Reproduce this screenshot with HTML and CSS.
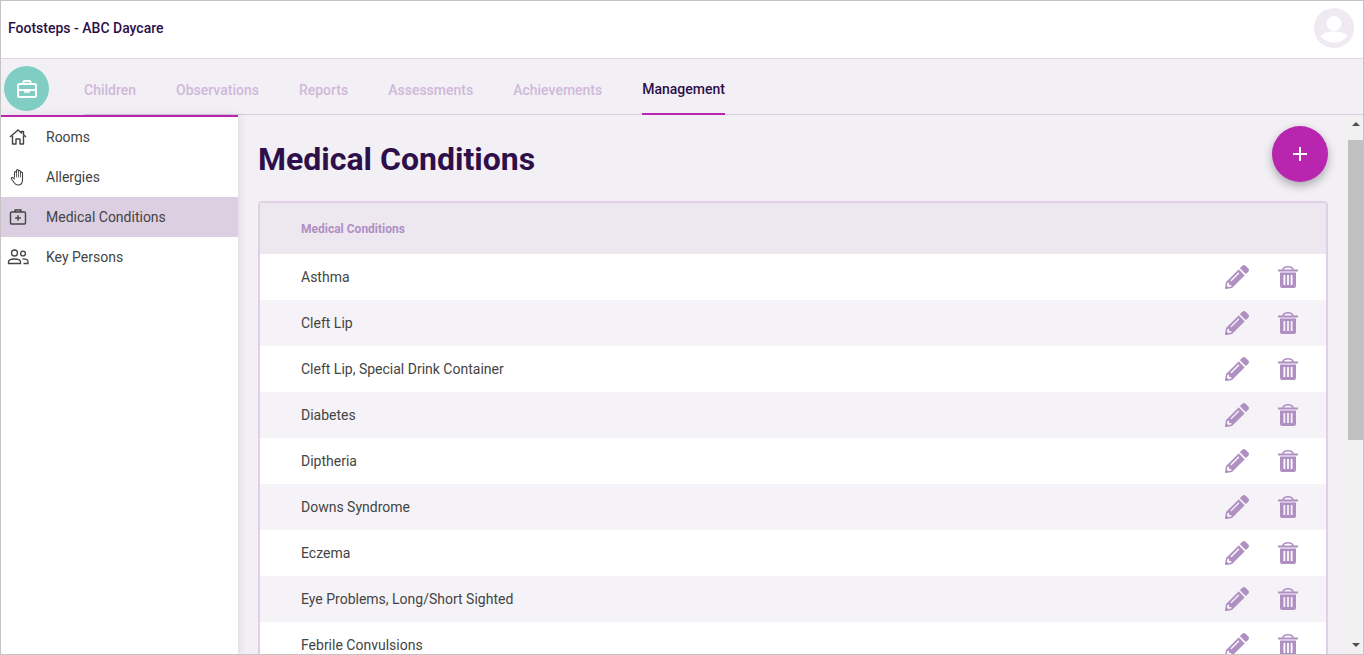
FILE: index.html
```html
<!DOCTYPE html>
<html lang="en">
<head>
    <meta charset="utf-8" />
    <title>Medical Conditions</title>
    <link rel="stylesheet" href="styles.css">
</head>
<body>
<div class="frame">
    <header class="top">
        <div class="brand">Footsteps - ABC Daycare</div>
        <svg class="avatar" viewBox="0 0 40 40">
            <circle cx="20" cy="20" r="20" fill="#efeaf1"/>
            <circle cx="20" cy="15.5" r="7.5" fill="#fff"/>
            <path d="M6.5 28c3-3.4 8-4.6 13.500-4.600s10.500 1.200 13.500 4.600c-3.200 4-8 6.500-13.500 6.500S9.700 32 6.500 28z" fill="#fff"/>
        </svg>
    </header>
    <nav class="nav">
        <div class="logo">
            <svg width="20" height="18" viewBox="0 0 20 18" fill="none" stroke="#fff" stroke-width="2">
                <path d="M6.500 4V2a1 1 0 0 1 1-1h5a1 1 0 0 1 1 1v2"/>
                <rect x="1" y="4" width="18" height="13" rx="1.500"/>
                <path d="M1 10h18"/>
                <path d="M8 10v2h4v-2" stroke-width="1.500"/>
            </svg>
        </div>
        <div class="tabs">
            <a class="tab">Children</a>
            <a class="tab">Observations</a>
            <a class="tab">Reports</a>
            <a class="tab">Assessments</a>
            <a class="tab">Achievements</a>
            <a class="tab tab-active">Management</a>
        </div>
    </nav>
    <div class="body">
        <aside class="side">
            <a class="side-item">
                <svg class="side-icon" viewBox="0 0 20 20" fill="none" stroke="#444" stroke-width="1.400" stroke-linejoin="round">
                    <path d="M2 10l8-7 3.500 3V4.500h2v3.200L18 10"/>
                    <path d="M4.500 8.500V17H8v-5h4v5h3.500V8.500"/>
                </svg>
                Rooms
            </a>
            <a class="side-item">
                <svg class="side-icon" viewBox="0 0 20 20" fill="none" stroke="#444" stroke-width="1.100" stroke-linecap="round" stroke-linejoin="round">
                    <path d="M6.500 10V5.500a1 1 0 0 1 2 0V3.500a1 1 0 0 1 2 0v1a1 1 0 0 1 2 0v1.500a1 1 0 0 1 2 0V13c0 3-1.800 5-4.500 5H10c-2 0-3-1-4-2.500L3.500 12c-.7-1 .6-2.200 1.600-1.300L6.500 12"/>
                    <path d="M8.500 5.500V10M10.500 4.500V10M12.500 6V10" stroke-width=".8"/>
                </svg>
                Allergies
            </a>
            <a class="side-item side-item-on">
                <svg class="side-icon" viewBox="0 0 20 20" fill="none" stroke="#444" stroke-width="1.400" stroke-linejoin="round">
                    <rect x="2.500" y="5" width="15" height="12" rx="1"/>
                    <path d="M7 5V3h6v2"/>
                    <path d="M10 8.200v5.600M7.200 11h5.600"/>
                </svg>
                Medical Conditions
            </a>
            <a class="side-item">
                <svg class="side-icon side-icon-wide" viewBox="0 0 22 20" fill="none" stroke="#444" stroke-width="1.300">
                    <circle cx="7.500" cy="6" r="3"/>
                    <path d="M1.500 16.500v-1.500c0-2 2.500-3 6-3s6 1 6 3v1.500z"/>
                    <circle cx="16" cy="6.500" r="2.400"/>
                    <path d="M15.500 11.800c3 0 5.500.8 5.500 2.700v2h-4.500"/>
                </svg>
                Key Persons
            </a>
        </aside>
        <main class="main">
            <div class="page-head">
                <h1 class="title">Medical Conditions</h1>
                <button class="fab">
                    <svg width="16" height="16" viewBox="0 0 16 16"><path d="M7 1h2v6h6v2H9v6H7V9H1V7h6z" fill="#fff"/></svg>
                </button>
            </div>
            <div class="card">
                <div class="card-head">Medical Conditions</div>
                <div class="row"><span>Asthma</span><div class="acts"><svg class="pen" viewBox="0 0 512 512"><use href="#pen"/></svg><svg class="bin" viewBox="0 0 20 22"><use href="#bin"/></svg></div></div>
                <div class="row"><span>Cleft Lip</span><div class="acts"><svg class="pen" viewBox="0 0 512 512"><use href="#pen"/></svg><svg class="bin" viewBox="0 0 20 22"><use href="#bin"/></svg></div></div>
                <div class="row"><span>Cleft Lip, Special Drink Container</span><div class="acts"><svg class="pen" viewBox="0 0 512 512"><use href="#pen"/></svg><svg class="bin" viewBox="0 0 20 22"><use href="#bin"/></svg></div></div>
                <div class="row"><span>Diabetes</span><div class="acts"><svg class="pen" viewBox="0 0 512 512"><use href="#pen"/></svg><svg class="bin" viewBox="0 0 20 22"><use href="#bin"/></svg></div></div>
                <div class="row"><span>Diptheria</span><div class="acts"><svg class="pen" viewBox="0 0 512 512"><use href="#pen"/></svg><svg class="bin" viewBox="0 0 20 22"><use href="#bin"/></svg></div></div>
                <div class="row"><span>Downs Syndrome</span><div class="acts"><svg class="pen" viewBox="0 0 512 512"><use href="#pen"/></svg><svg class="bin" viewBox="0 0 20 22"><use href="#bin"/></svg></div></div>
                <div class="row"><span>Eczema</span><div class="acts"><svg class="pen" viewBox="0 0 512 512"><use href="#pen"/></svg><svg class="bin" viewBox="0 0 20 22"><use href="#bin"/></svg></div></div>
                <div class="row"><span>Eye Problems, Long/Short Sighted</span><div class="acts"><svg class="pen" viewBox="0 0 512 512"><use href="#pen"/></svg><svg class="bin" viewBox="0 0 20 22"><use href="#bin"/></svg></div></div>
                <div class="row"><span>Febrile Convulsions</span><div class="acts"><svg class="pen" viewBox="0 0 512 512"><use href="#pen"/></svg><svg class="bin" viewBox="0 0 20 22"><use href="#bin"/></svg></div></div>
            </div>
        </main>
        <div class="scroll">
            <div class="scroll-up"></div>
            <div class="scroll-thumb"></div>
            <div class="scroll-down"></div>
        </div>
    </div>
</div>
<svg class="defs" width="0" height="0">
    <defs>
        <g id="pen"><path d="M497.900 142.100l-46.100 46.100c-4.700 4.700-12.300 4.700-17 0l-111-111c-4.700-4.700-4.700-12.300 0-17l46.100-46.100c18.700-18.700 49.100-18.700 67.900 0l60.100 60.100c18.800 18.700 18.800 49.100 0 67.900zM284.200 99.800L21.600 362.400.4 483.900c-2.900 16.400 11.400 30.600 27.800 27.800l121.500-21.300 262.600-262.600c4.700-4.700 4.700-12.300 0-17l-111-111c-4.800-4.700-12.400-4.700-17.100 0zM124.100 339.900c-5.500-5.500-5.500-14.300 0-19.800l154-154c5.500-5.500 14.300-5.500 19.800 0s5.500 14.300 0 19.800l-154 154c-5.500 5.500-14.300 5.500-19.800 0zM88 424h48v36.300l-64.500 11.300-31.100-31.100L51.700 376H88v48z"/></g>
        <g id="bin"><path fill-rule="evenodd" d="M0 3.500h4.200C4.600 1.400 6.500 0 10 0s5.400 1.400 5.800 3.500H20v2H0zM5.800 3.500h8.400C13.800 2.300 12.400 1.500 10 1.500S6.200 2.300 5.800 3.500zM2 6.500h16V20a2 2 0 0 1-2 2H4a2 2 0 0 1-2-2zM5.500 9v10h1.800V9zM9.100 9v10h1.800V9zM12.700 9v10h1.800V9z"/></g>
    </defs>
</svg>
</body>
</html>
```
FILE: styles.css
```css
* {
    box-sizing: border-box;
    padding: 0;
    margin: 0;
    font-family: Roboto, "Liberation Sans", sans-serif;
}
body {
    background-color: #fff;
}
.frame {
    display: flex;
    flex-direction: column;
    height: 655px;
    border: 1px solid #c4c4c4;
    overflow: hidden;
}
.defs {
    position: absolute;
}

/* top bar */
.top {
    display: flex;
    justify-content: space-between;
    align-items: center;
    flex: none;
    height: 58px;
    padding: 0 9px 3px 7px;
    border-bottom: 1px solid #e3d2ea;
    background-color: #fff;
}
.brand {
    font-size: 14px;
    font-weight: 500;
    color: #2e0f4a;
}
.avatar {
    width: 40px;
    height: 40px;
}

/* tabs */
.nav {
    display: flex;
    flex: none;
    height: 56px;
    background-color: #f2f0f5;
}
.logo {
    display: flex;
    justify-content: center;
    align-items: center;
    flex: none;
    width: 45px;
    height: 45px;
    margin: 7px 35px 0 3px;
    border-radius: 50%;
    background-color: #80cdc4;
}
.tabs {
    display: flex;
    flex: 1;
    gap: 40px;
    border-bottom: 1px solid #d8cbe0;
}
.tab {
    display: flex;
    align-items: center;
    padding-top: 6px;
    font-size: 14px;
    font-weight: 500;
    color: #d0b8da;
}
.tab-active {
    color: #2e0f4a;
    border-bottom: 2px solid #b825ae;
    margin-bottom: -1px;
}

/* page body */
.body {
    display: flex;
    flex: 1;
    min-height: 0;
    background-color: #f2f0f5;
}
.side {
    flex: none;
    width: 237px;
    border-top: 2px solid #b825ae;
    background-color: #fff;
    box-shadow: 2px 0 8px rgba(60, 30, 80, 0.1);
    z-index: 1;
}
.side-item {
    display: flex;
    align-items: center;
    height: 40px;
    padding-left: 7px;
    font-size: 14px;
    color: #444;
}
.side-item-on {
    background-color: #dccfe2;
}
.side-icon {
    flex: none;
    width: 20px;
    height: 20px;
    margin-right: 18px;
}
.side-icon-wide {
    width: 22px;
    margin: 0 17px 0 -1px;
}
.main {
    flex: 1;
    min-width: 0;
    padding: 11px 20px 0;
    overflow: hidden;
}
.page-head {
    display: flex;
    justify-content: space-between;
    align-items: center;
    height: 56px;
    margin-bottom: 19px;
}
.title {
    padding-top: 10px;
    font-size: 32px;
    font-weight: 700;
    color: #2e0f4a;
}
.fab {
    display: flex;
    justify-content: center;
    align-items: center;
    width: 56px;
    height: 56px;
    border: none;
    border-radius: 50%;
    background-color: #b825ae;
    box-shadow: 0 4px 10px rgba(0, 0, 0, 0.3);
}

/* list */
.card {
    border: 2px solid #e0d0e6;
    border-bottom: none;
    border-radius: 4px 4px 0 0;
    background-color: #fff;
}
.card-head {
    display: flex;
    align-items: center;
    height: 51px;
    padding-left: 41px;
    font-size: 12px;
    font-weight: 700;
    color: #b08fc3;
    background-color: #ede8f0;
}
.row {
    display: flex;
    justify-content: space-between;
    align-items: center;
    height: 46px;
    padding: 0 28px 0 41px;
    font-size: 14px;
    color: #444;
}
.row:nth-child(odd) {
    background-color: #f5f3f7;
}
.acts {
    display: flex;
    align-items: center;
    gap: 29px;
    fill: #b08fc3;
}
.pen {
    width: 24px;
    height: 24px;
}
.bin {
    width: 20px;
    height: 22px;
}

/* scrollbar */
.scroll {
    display: flex;
    flex-direction: column;
    align-items: center;
    flex: none;
    width: 15px;
    background-color: #f1f1f1;
}
.scroll-up, .scroll-down {
    flex: none;
    width: 0;
    height: 0;
    border-left: 4px solid transparent;
    border-right: 4px solid transparent;
}
.scroll-up {
    margin: 7px 0 14px;
    border-bottom: 4px solid #505050;
}
.scroll-thumb {
    flex: none;
    width: 100%;
    height: 300px;
    background-color: #c1c1c1;
}
.scroll-down {
    margin-top: auto;
    margin-bottom: 7px;
    border-top: 4px solid #505050;
}
```
